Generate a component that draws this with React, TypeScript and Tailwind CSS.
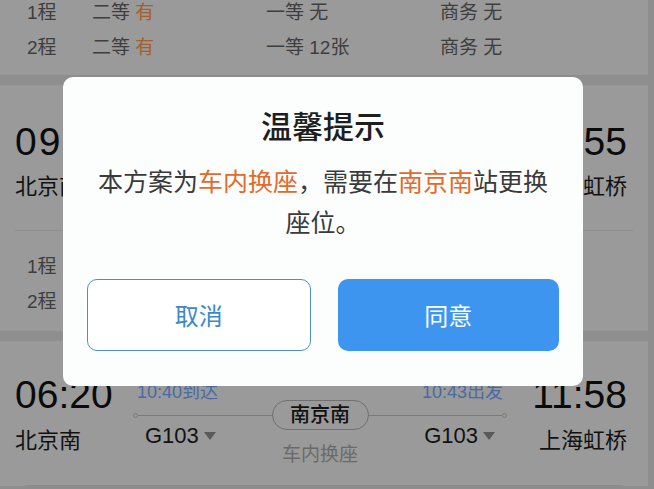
import React from "react";

const sans = "font-['Liberation_Sans','Noto_Sans_CJK_SC',sans-serif]";

function SeatRow({ label, first, full }: { label: string; first: string; full: boolean }) {
  return (
    <div className="flex h-[26px] items-center pl-[27px] text-[19px] leading-[26px] text-[#3e3e3e]">
      <span className="w-[65px]">{label}</span>
      {full && (
        <>
          <span className="w-[174px]">
            二等 <span className="text-[#a45f2f]">有</span>
          </span>
          <span className="w-[174px]">一等 {first}</span>
          <span>商务 无</span>
        </>
      )}
    </div>
  );
}

function SeatRows({ first2, full }: { first2: string; full: boolean }) {
  return (
    <div className="flex flex-col gap-[9px]">
      <SeatRow label="1程" first="无" full={full} />
      <SeatRow label="2程" first={first2} full={full} />
    </div>
  );
}

function Dot() {
  return <span className="h-[5px] w-[5px] shrink-0 rounded-full border border-[#7a7a7a]" />;
}

function Tri() {
  return (
    <svg width="12" height="8" viewBox="0 0 12 8" className="ml-[5px] shrink-0">
      <polygon points="0,0 12,0 6,8" fill="#5a5a5a" />
    </svg>
  );
}

export default function App() {
  return (
    <div className={`relative h-[489px] w-[654px] overflow-hidden bg-[#8e8e8e] ${sans}`}>
      {/* card 1 (cut off at top) */}
      <div className="mr-[6px] bg-[#9a9a9a] pb-[14px]">
        <SeatRows first2="12张" full />
      </div>

      {/* card 2 */}
      <div className="mr-[6px] mt-[10px] bg-[#9a9a9a] pb-[16px] pt-[34px]">
        <div className="flex justify-between pl-[15px] pr-[21px]">
          <div>
            <div className="text-[39px] leading-[46px] tracking-[2px] text-[#0b0b0b]">09:10</div>
            <div className="mt-[7px] text-[22px] leading-[30px] text-[#111]">北京南</div>
          </div>
          <div className="text-right">
            <div className="text-[39px] leading-[46px] text-[#0b0b0b]">13:55</div>
            <div className="mt-[7px] text-[22px] leading-[30px] text-[#111]">上海虹桥</div>
          </div>
        </div>
        <div className="mx-[15px] mt-[28px] h-px bg-[#8d8d8d]" />
        <div className="mt-[23px]">
          <SeatRows first2="无" full={false} />
        </div>
      </div>

      {/* card 3 */}
      <div className="mr-[6px] mt-[10px] bg-[#9a9a9a] pt-[31px]">
        <div className="flex pl-[15px] pr-[21px]">
          <div className="w-[118px]">
            <div className="text-[39px] leading-[46px] text-[#0b0b0b]">06:20</div>
            <div className="mt-[8px] text-[22px] leading-[30px] text-[#111]">北京南</div>
          </div>
          <div className="grid w-[374px] grid-cols-[1fr_97px_1fr]">
            <div className="flex flex-col">
              <div className="mt-[9px] pl-[4px] text-[18px] leading-[22px] text-[#4a6aa3]">10:40到达</div>
              <div className="mt-[10px] flex h-[5px] items-center">
                <Dot />
                <span className="h-px flex-1 bg-[#7a7a7a]" />
              </div>
              <div className="mt-[5px] flex items-center pl-[12px] text-[22px] leading-[26px] text-[#111]">
                G103
                <Tri />
              </div>
            </div>
            <div className="flex flex-col items-center">
              <div className="mt-[28px] flex h-[30px] w-full items-center justify-center rounded-full border border-[#707070] text-[20px] font-medium text-[#111]">
                南京南
              </div>
              <div className="mt-[14px] text-[19px] leading-[22px] text-[#6a6a6a]">车内换座</div>
            </div>
            <div className="flex flex-col items-end">
              <div className="mt-[9px] pr-[4px] text-[18px] leading-[22px] text-[#4a6aa3]">10:43出发</div>
              <div className="mt-[10px] flex h-[5px] w-full items-center">
                <span className="h-px flex-1 bg-[#7a7a7a]" />
                <Dot />
              </div>
              <div className="mt-[5px] flex items-center pr-[12px] text-[22px] leading-[26px] text-[#111]">
                G103
                <Tri />
              </div>
            </div>
          </div>
          <div className="flex-1 text-right">
            <div className="text-[39px] leading-[46px] text-[#0b0b0b]">11:58</div>
            <div className="mt-[8px] text-[22px] leading-[30px] text-[#111]">上海虹桥</div>
          </div>
        </div>
        <div className="mx-[25px] mt-[19px] h-px bg-[#8b8b8b]" />
      </div>

      {/* dialog */}
      <div className="absolute left-[63px] top-[77px] w-[520px] rounded-[10px] bg-[#fcfefe] px-[24px] pb-[35px] pt-[28px] font-['Noto_Sans_CJK_SC',sans-serif]">
        <div className="text-center text-[31px] font-medium leading-[40px] text-[#1e1e1e]">温馨提示</div>
        <p className="mt-[15px] text-center text-[25px] leading-[41px] text-[#3a3a3a]">
          本方案为<span className="text-[#e5692a]">车内换座</span>，需要在
          <span className="text-[#e5692a]">南京南</span>站更换
          <br />
          座位。
        </p>
        <div className="mt-[37px] flex gap-[27px]">
          <button className="h-[72px] flex-1 rounded-[10px] border-[1.5px] border-[#4f8fc4] bg-white text-[24px] text-[#3b88cc]">
            取消
          </button>
          <button className="h-[72px] flex-1 rounded-[10px] bg-[#3d95f0] text-[24px] text-white">
            同意
          </button>
        </div>
      </div>
    </div>
  );
}
